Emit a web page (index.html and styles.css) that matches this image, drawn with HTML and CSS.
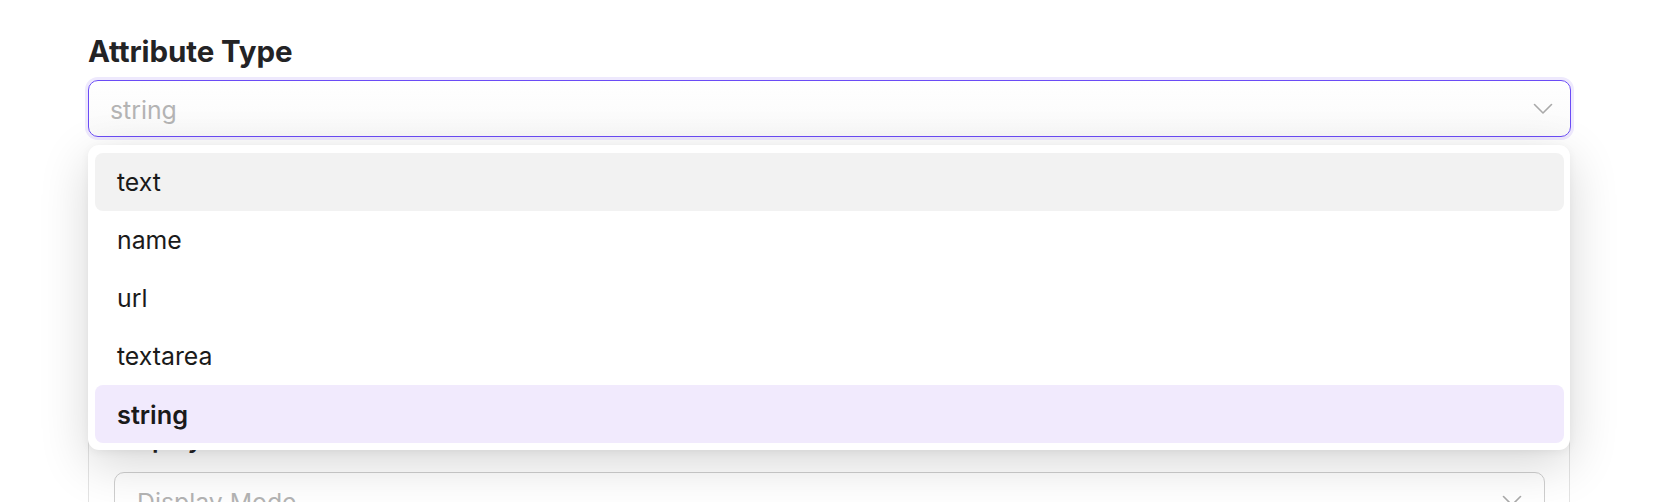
FILE: index.html
```html
<!DOCTYPE html>
<html lang="en">
<head>
<meta charset="utf-8">
<title>Attribute Type</title>
<link rel="stylesheet" href="styles.css">
</head>
<body>
<main class="page">
  <div class="field">
    <label class="field-label">Attribute Type</label>
    <div class="select-wrap">
      <div class="select select-open">
        <span class="placeholder">string</span>
        <svg class="chevron" width="20" height="12" viewBox="0 0 20 12"><path d="M1.5 1.5 L10 10 L18.5 1.5" fill="none" stroke="#a9a9a9" stroke-width="1.6" stroke-linecap="round" stroke-linejoin="round"/></svg>
      </div>
      <ul class="menu">
        <li class="option option-hover">text</li>
        <li class="option">name</li>
        <li class="option">url</li>
        <li class="option">textarea</li>
        <li class="option option-selected">string</li>
      </ul>
    </div>
  </div>
  <section class="card">
    <label class="field-label small">Display Mode</label>
    <div class="select">
      <span class="placeholder">Display Mode</span>
      <svg class="chevron" width="20" height="12" viewBox="0 0 20 12"><path d="M1.5 1.5 L10 10 L18.5 1.5" fill="none" stroke="#a9a9a9" stroke-width="1.6" stroke-linecap="round" stroke-linejoin="round"/></svg>
    </div>
  </section>
</main>
</body>
</html>
```
FILE: styles.css
```css
* { box-sizing: border-box; }
html, body { margin: 0; background: #ffffff; }
body {
  font-family: Inter, "Noto Sans", sans-serif;
  color: #1c1c1e;
  overflow: hidden;
  height: 502px;
}
.page {
  padding: 33px 107px 0 88px;
}
.field-label {
  display: block;
  font-size: 29.5px;
  font-weight: 700;
  line-height: 36px;
  color: #232325;
  letter-spacing: -0.1px;
  margin-bottom: 11px;
}
.field-label.small {
  font-size: 25px;
  font-weight: 600;
  line-height: 30px;
  margin-bottom: 18px;
}
.select-wrap {
  position: relative;
  z-index: 2;
}
.select {
  height: 57px;
  border: 1px solid #cfcfcf;
  border-radius: 10px;
  background: #ffffff;
  display: flex;
  align-items: center;
  justify-content: space-between;
  padding: 0 16px 0 22px;
}
.select-open {
  border: 1.5px solid #6b4cf6;
  box-shadow: 0 0 0 3px #eee9fd;
  background: linear-gradient(#ffffff, #fafafa);
  padding-left: 21px;
}
.placeholder {
  font-size: 24.8px;
  color: #b4b4b4;
  padding-top: 2px;
}
.chevron { display: block; margin-right: 1px; }
.menu {
  position: absolute;
  top: calc(100% + 8px);
  left: 0;
  right: 1px;
  margin: 0;
  padding: 8px 6px 7px 7px;
  list-style: none;
  background: #ffffff;
  border-radius: 11px;
  box-shadow: 0 14px 50px rgba(0, 0, 0, 0.16), 0 2px 8px rgba(0, 0, 0, 0.05);
}
.option {
  height: 58px;
  display: flex;
  align-items: center;
  padding-left: 22px;
  font-size: 24.8px;
  color: #1a1a1a;
  border-radius: 8px;
}
.option-hover { background: #f2f2f2; }
.option-selected {
  background: #f1eafd;
  font-weight: 600;
  font-size: 25.3px;
}
.card {
  margin-top: 118px;
  margin-right: 1px;
  border: 1px solid #e3e3e3;
  border-radius: 10px;
  padding: 168px 24px 20px 25px;
  height: 400px;
}
.card .select {
  padding-left: 22px;
  padding-right: 21px;
}
```
